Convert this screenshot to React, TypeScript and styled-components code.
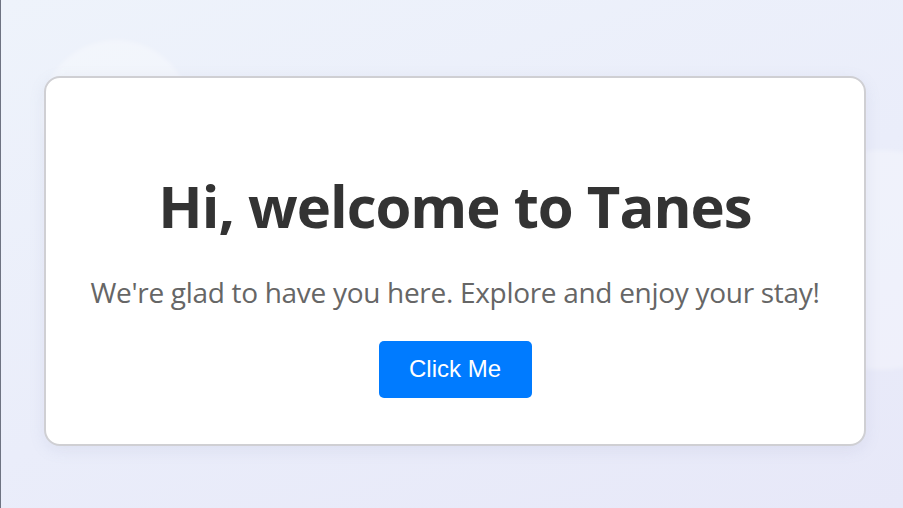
import styled, { createGlobalStyle } from "styled-components";

const GlobalStyle = createGlobalStyle`
    html, body {
        margin: 0;
        padding: 0;
    }
    body {
        font-family: "Open Sans", "Noto Sans", sans-serif;
    }
`;

const Page = styled.div`
    position: relative;
    overflow: hidden;
    box-sizing: border-box;
    width: 903px;
    height: 508px;
    border-left: 1px solid #6e7382;
    background: linear-gradient(160deg, #eef3fb 0%, #eaedfa 55%, #e7e8f8 100%);
    display: flex;
    justify-content: center;
    align-items: flex-start;
    padding: 76px 37px 0 43px;
`;

const Blob = styled.div<{ $size: number; $top: number; $left: number }>`
    position: absolute;
    width: ${(p) => p.$size}px;
    height: ${(p) => p.$size}px;
    top: ${(p) => p.$top}px;
    left: ${(p) => p.$left}px;
    border-radius: 50%;
    background: rgba(255, 255, 255, 0.3);
    filter: blur(2px);
`;

const Card = styled.div`
    position: relative;
    box-sizing: border-box;
    width: 822px;
    height: 370px;
    flex-shrink: 0;
    background: #fff;
    border: 2px solid #cfcfd3;
    border-radius: 16px;
    box-shadow: 0 4px 16px rgba(120, 130, 170, 0.12);
    display: flex;
    flex-direction: column;
    align-items: center;
    padding-top: 93px;
`;

const Title = styled.h1`
    margin: 0;
    font-size: 58px;
    font-weight: 700;
    color: #333;
    letter-spacing: -1px;
    line-height: 1.2;
    white-space: nowrap;
`;

const Subtitle = styled.p`
    margin: 33px 0 0;
    font-size: 28px;
    color: #666;
    letter-spacing: -0.3px;
    line-height: 1.3;
    white-space: nowrap;
`;

const Button = styled.button`
    margin-top: 31px;
    width: 153px;
    height: 57px;
    border: none;
    border-radius: 5px;
    background: #007bff;
    color: #fff;
    font-family: "Liberation Sans", Arial, sans-serif;
    font-size: 24px;
    cursor: pointer;
`;

export default function App() {
    return (
        <>
            <GlobalStyle />
            <Page>
                <Blob $size={150} $top={40} $left={40} />
                <Blob $size={220} $top={150} $left={770} />
                <Card>
                    <Title>Hi, welcome to Tanes</Title>
                    <Subtitle>We're glad to have you here. Explore and enjoy your stay!</Subtitle>
                    <Button>Click Me</Button>
                </Card>
            </Page>
        </>
    );
}
